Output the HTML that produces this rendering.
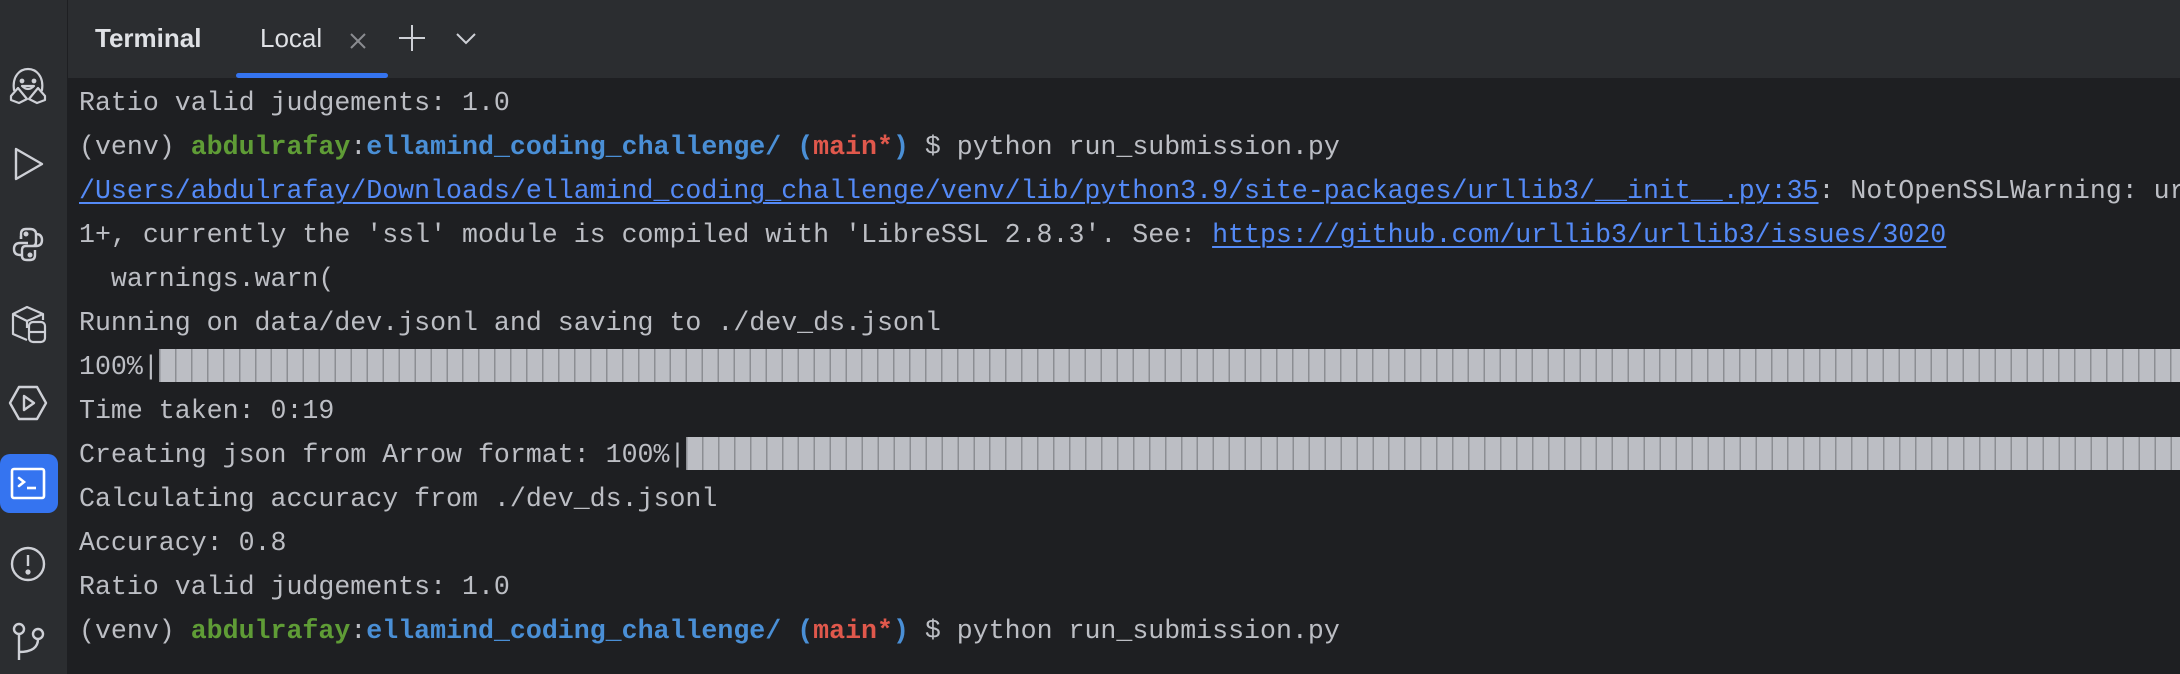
<!DOCTYPE html>
<html><head><meta charset="utf-8"><style>
html,body{margin:0;padding:0;width:2180px;height:674px;overflow:hidden;}
body{background:#1e1f22;position:relative;font-family:"Liberation Mono",monospace;}
#side{position:absolute;left:0;top:0;width:67px;height:674px;background:#2b2d30;border-right:1px solid #1e1f22;}
#head{position:absolute;left:68px;top:0;right:0;height:78px;background:#2b2d30;}
.ht{position:absolute;top:22px;font-family:"Liberation Sans",sans-serif;font-size:26px;color:#dfe1e5;line-height:32px;}
#term{position:absolute;left:79px;top:81px;right:0;font-size:26.6px;line-height:44px;color:#bcbec4;}
.l{height:44px;white-space:pre;}
.g{color:#5f9c36;font-weight:bold}
.b{color:#4a8fd6;font-weight:bold}
.r{color:#e0584c;font-weight:bold}
.a{color:#548af7;text-decoration:underline;text-decoration-thickness:2px;text-underline-offset:4px;}
.bar{position:absolute;right:0;height:33px;background:repeating-linear-gradient(90deg,#8c8e93 0 1.5px,#bcbec4 1.5px 15.96px);}
svg{position:absolute;}
</style></head><body>
<div id="side">
<svg style="left:8px;top:66px" width="40" height="40" viewBox="0 0 40 40" fill="none" stroke="#ced0d6" stroke-width="2.2" stroke-linecap="round" stroke-linejoin="round">
<path d="M6 24 C4 10 12 3 20 3 C28 3 36 10 34 24"/><circle cx="14" cy="15" r="1.3" fill="#ced0d6"/><circle cx="26" cy="15" r="1.3" fill="#ced0d6"/><path d="M14 20 Q20 26 26 20 Z"/><path d="M3 30 L10 22 L19 33 L11 37 L3 34 Z"/><path d="M37 30 L30 22 L21 33 L29 37 L37 34 Z"/></svg>
<svg style="left:12px;top:146px" width="34" height="36" viewBox="0 0 34 36" fill="none" stroke="#ced0d6" stroke-width="2.4" stroke-linejoin="round"><path d="M4 3 L30 18 L4 33 Z"/></svg>
<svg style="left:10px;top:226px" width="36" height="36" viewBox="0 0 36 36" fill="none" stroke="#ced0d6" stroke-width="2.4" stroke-linejoin="round"><path d="M18 17 H10 Q4 17 4 23 Q4 29 10 29 H12 V24 Q12 20 16 20 H22 Q26 20 26 16 V8 Q26 3 20 3 H16 Q11 3 11 8 V13 M18 20 H26 Q32 20 32 14 Q32 8 26 8"/><path d="M11 13 V10"/><path d="M12 29 V30 Q12 34 17 34 H20 Q25 34 25 29 V24"/><circle cx="16" cy="8" r="1.3" fill="#ced0d6"/><circle cx="20" cy="29" r="1.3" fill="#ced0d6"/></svg>
<svg style="left:9px;top:304px" width="40" height="40" viewBox="0 0 40 40" fill="none" stroke="#ced0d6" stroke-width="2.2" stroke-linejoin="round"><path d="M18 36 L4 30 V10 L18 3 L34 10 V16"/><path d="M4 10 L18 17 L34 10"/><path d="M18 17 V24"/><rect x="20" y="18" width="16" height="20" rx="4"/><path d="M20 28 H36"/></svg>
<svg style="left:8px;top:383px" width="40" height="40" viewBox="0 0 40 40" fill="none" stroke="#ced0d6" stroke-width="2.4" stroke-linejoin="round"><path d="M11 4 H29 L38 20 L29 36 H11 L2 20 Z"/><path d="M16 13 L26 20 L16 27 Z"/></svg>
<div style="position:absolute;left:0;top:454px;width:58px;height:59px;background:#3574f0;border-radius:10px;"></div>
<svg style="left:10px;top:467px" width="36" height="34" viewBox="0 0 36 34" fill="none" stroke="#fff" stroke-width="2.6"><rect x="2" y="2" width="32" height="29" rx="2"/><path d="M9 11 L14 15 L9 19" stroke-linecap="round"/><path d="M17 21 H26"/></svg>
<svg style="left:9px;top:545px" width="38" height="38" viewBox="0 0 38 38" fill="none" stroke="#ced0d6" stroke-width="2.4"><circle cx="19" cy="19" r="16"/><path d="M19 10 V21"/><circle cx="19" cy="27" r="1.4" fill="#ced0d6"/></svg>
<svg style="left:10px;top:622px" width="36" height="40" viewBox="0 0 36 40" fill="none" stroke="#ced0d6" stroke-width="2.4"><circle cx="9" cy="7" r="5"/><circle cx="28" cy="12" r="5"/><path d="M9 12 V38 M9 30 Q28 30 28 17"/></svg>
</div>
<div id="head">
<div class="ht" style="left:27px;font-weight:bold;">Terminal</div>
<div class="ht" style="left:192px;">Local</div>
<svg style="left:281px;top:32px" width="18" height="18" viewBox="0 0 18 18" stroke="#8a8c90" stroke-width="2"><path d="M2 2 L16 16 M16 2 L2 16"/></svg>
<svg style="left:330px;top:24px" width="28" height="28" viewBox="0 0 28 28" stroke="#ced0d6" stroke-width="2"><path d="M14 1 V27 M1 14 H27"/></svg>
<svg style="left:387px;top:32px" width="22" height="14" viewBox="0 0 22 14" fill="none" stroke="#ced0d6" stroke-width="2"><path d="M2 2 L11 11 L20 2"/></svg>
<div style="position:absolute;left:168px;top:73px;width:152px;height:5px;background:#3574f0;border-radius:3px;"></div>
</div>
<div id="term"><div class="l">Ratio valid judgements: 1.0</div><div class="l">(venv) <span class="g">abdulrafay</span>:<span class="b">ellamind_coding_challenge/</span> <span class="b">(</span><span class="r">main*</span><span class="b">)</span> $ python run_submission.py</div><div class="l"><span class="a">/Users/abdulrafay/Downloads/ellamind_coding_challenge/venv/lib/python3.9/site-packages/urllib3/__init__.py:35</span>: NotOpenSSLWarning: urllib3 v2 only supports OpenSSL 1.1.1+</div><div class="l">1+, currently the 'ssl' module is compiled with 'LibreSSL 2.8.3'. See: <span class="a">https://github.com/urllib3/urllib3/issues/3020</span></div><div class="l">  warnings.warn(</div><div class="l">Running on data/dev.jsonl and saving to ./dev_ds.jsonl</div><div class="l">100%|</div><div class="l">Time taken: 0:19</div><div class="l">Creating json from Arrow format: 100%|</div><div class="l">Calculating accuracy from ./dev_ds.jsonl</div><div class="l">Accuracy: 0.8</div><div class="l">Ratio valid judgements: 1.0</div><div class="l">(venv) <span class="g">abdulrafay</span>:<span class="b">ellamind_coding_challenge/</span> <span class="b">(</span><span class="r">main*</span><span class="b">)</span> $ python run_submission.py</div></div>
<div class="bar" style="left:159px;top:349px;"></div>
<div class="bar" style="left:686px;top:437px;"></div>
</body></html>
